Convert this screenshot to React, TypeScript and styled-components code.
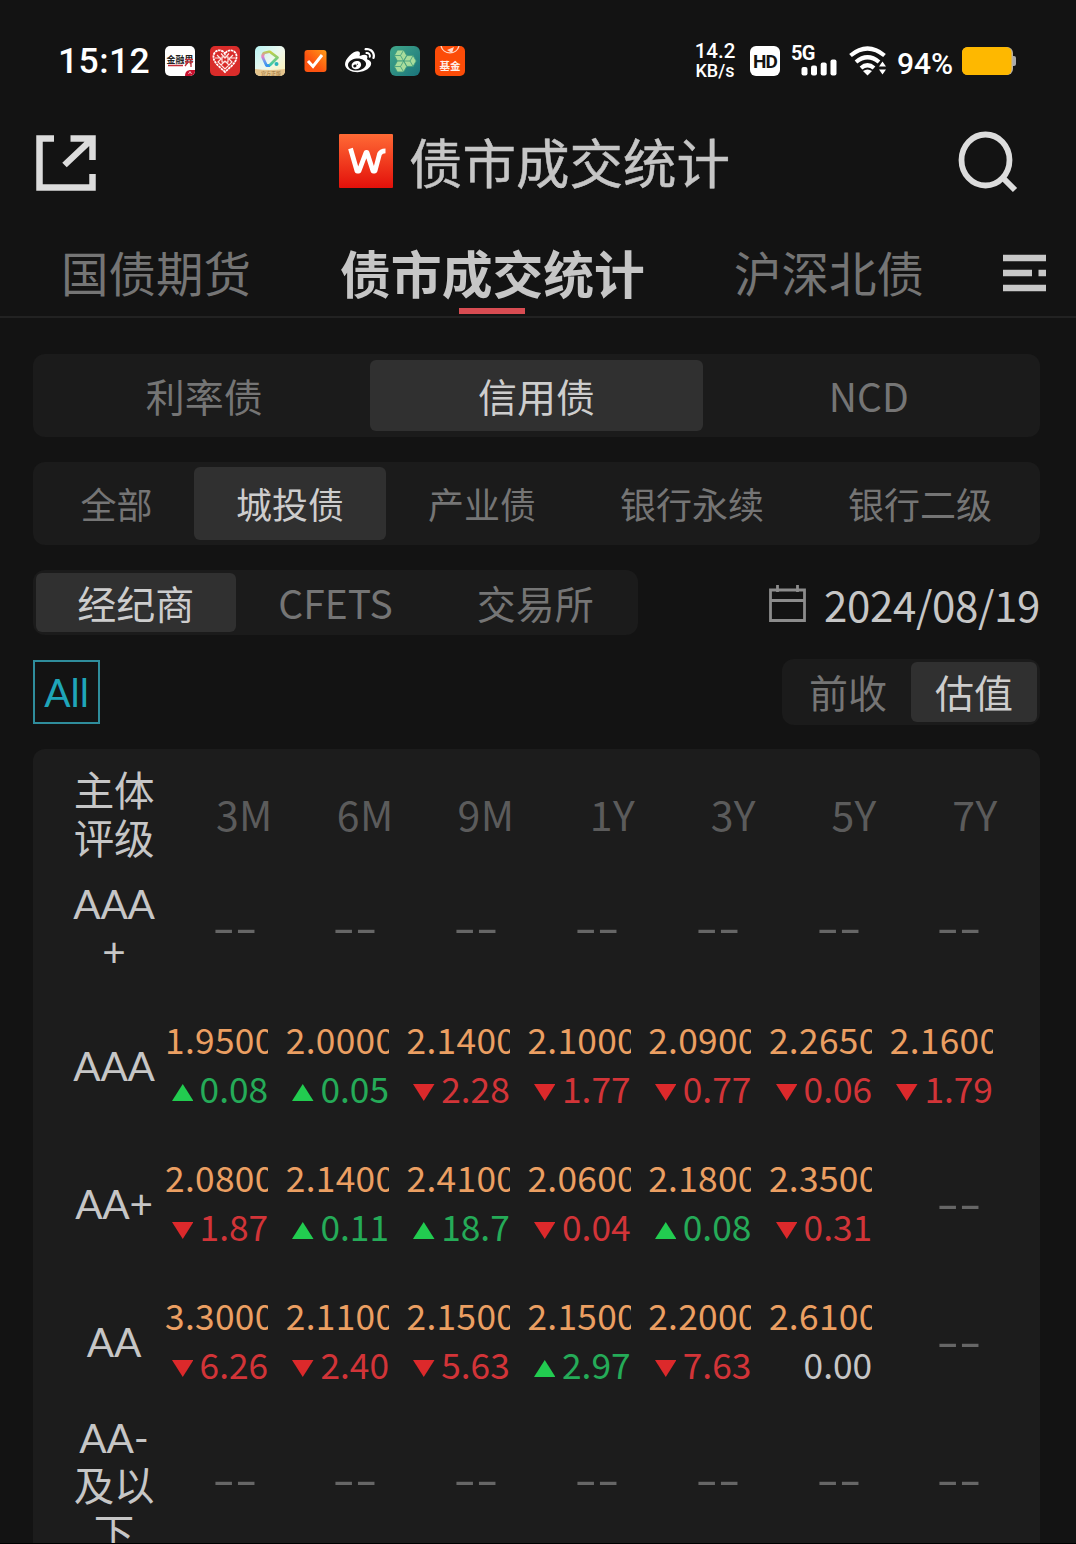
import React from "react";
import styled, { createGlobalStyle } from "styled-components";
import { FaWeibo } from "react-icons/fa";

const cjk = `"Noto Sans CJK SC", sans-serif`;
const latin = `Roboto, "Noto Sans CJK SC", sans-serif`;
const round = `Lato, "Noto Sans CJK SC", sans-serif`;

const Global = createGlobalStyle`
  * { box-sizing: border-box; }
  body { margin: 0; background: #131313; }
`;

const Screen = styled.div`
  width: 1076px;
  height: 1544px;
  overflow: hidden;
  display: flex;
  flex-direction: column;
  background: #131313;
  border-bottom: 1px solid #000;
  color: #c6c6c6;
  font-family: ${cjk};
  white-space: nowrap;
`;

/* ---------- status bar ---------- */
const StatusBar = styled.div`
  flex: none;
  height: 122px;
  padding: 0 60px 0 58px;
  display: flex;
  align-items: center;
  justify-content: space-between;
  font-family: ${latin};
  color: #fff;
`;
const StatusSide = styled.div`
  display: flex;
  align-items: center;
`;
const Clock = styled.span`
  width: 107px;
  font-size: 35.5px;
  font-weight: 500;
  letter-spacing: 0.4px;
  line-height: 40px;
`;
const AppIcons = styled.div`
  display: flex;
  gap: 15px;
  svg { display: block; }
`;
const Speed = styled.div`
  width: 44px;
  margin-right: 13px;
  text-align: center;
  font-weight: 500;
  font-size: 20.5px;
  line-height: 19px;
`;
const SpeedUnit = styled.div`
  font-size: 18px;
`;
const HdBadge = styled.div`
  width: 30px;
  height: 30px;
  margin-right: 11px;
  border-radius: 6px;
  background: #fff;
  color: #131313;
  font-size: 19px;
  font-weight: 700;
  line-height: 31px;
  text-align: center;
  letter-spacing: -0.8px;
`;
const Signal = styled.div`
  width: 46px;
  height: 32px;
  margin-right: 12px;
  display: grid;
  grid-template-rows: 16px 16px;
  font-size: 20px;
  font-weight: 700;
  line-height: 17px;
  letter-spacing: -0.8px;
  svg { justify-self: end; margin-top: -2px; }
`;
const Percent = styled.span`
  width: 57px;
  margin: 4px 8px 0 10px;
  font-size: 30px;
  font-weight: 500;
`;

/* ---------- title and tabs ---------- */
const TitleBar = styled.header`
  flex: none;
  height: 80px;
  padding: 0 57px 0 35px;
  display: flex;
  align-items: center;
  justify-content: space-between;
`;
const TitleGroup = styled.div`
  display: flex;
  align-items: center;
  gap: 16px;
  margin: 0 0 2px 15px;
`;
const Title = styled.h1`
  margin: 0;
  font-size: 53.5px;
  font-weight: 400;
  line-height: 76px;
  -webkit-text-stroke: 0.5px;
`;
const Tabs = styled.nav`
  flex: none;
  height: 116px;
  padding: 0 30px 0 61px;
  display: flex;
  align-items: stretch;
  justify-content: space-between;
  border-bottom: 2px solid #222;
`;
const Tab = styled.div<{ $active?: boolean }>`
  display: flex;
  flex-direction: column;
  align-items: center;
  padding-top: 36px;
  font-size: ${(p) => (p.$active ? 50.8 : 47.5)}px;
  font-weight: ${(p) => (p.$active ? 700 : 400)};
  line-height: 68px;
  color: ${(p) => (p.$active ? "#c6c6c6" : "#757575")};
`;
const TabLine = styled.div`
  width: 66px;
  height: 6px;
  margin-top: 2px;
  background: #d84c52;
`;
const MenuButton = styled.div`
  display: flex;
  align-items: center;
  margin-left: -10px;
  padding-top: 27px;
`;

/* ---------- filters ---------- */
const Filters = styled.section`
  flex: none;
  padding: 36px 36px 0 33px;
  display: flex;
  flex-direction: column;
`;
const Segment = styled.div<{ $height: number; $pad: string; $width?: number }>`
  display: flex;
  width: ${(p) => (p.$width ? `${p.$width}px` : "100%")};
  height: ${(p) => p.$height}px;
  padding: ${(p) => p.$pad};
  border-radius: 12px;
  background: #1b1b1b;
`;
const Option = styled.div<{ $active?: boolean; $size?: number; $grow?: number }>`
  flex: ${(p) => p.$grow ?? 1} 1 0;
  display: flex;
  align-items: center;
  justify-content: center;
  border-radius: 6px;
  font-size: ${(p) => p.$size ?? 39}px;
  line-height: 1;
  padding-bottom: 1px;
  background: ${(p) => (p.$active ? "#303030" : "transparent")};
  color: ${(p) => (p.$active ? "#cdcdcd" : "#757575")};
`;
const FilterRow = styled.div<{ $gap: number }>`
  display: flex;
  align-items: center;
  justify-content: space-between;
  margin-top: ${(p) => p.$gap}px;
`;
const DatePick = styled.div`
  display: flex;
  align-items: center;
  gap: 18px;
  font-size: 42px;
  line-height: 60px;
  letter-spacing: -0.35px;
  padding-top: 2px;
`;
const AllTag = styled.div`
  width: 67px;
  height: 64px;
  border: 2px solid #2f8d9c;
  color: #1fa5b9;
  font-family: ${round};
  font-size: 39px;
  line-height: 61px;
  text-align: center;
`;

/* ---------- table ---------- */
const Table = styled.section`
  flex: none;
  margin: 24px 36px 0 33px;
  padding-top: 22px;
  border-radius: 12px 12px 0 0;
  background: #1c1c1c;
`;
const Row = styled.div<{ $head?: boolean }>`
  display: grid;
  grid-template-columns: 115px repeat(7, 120.8px);
  grid-template-rows: 100%;
  height: ${(p) => (p.$head ? 88 : 138)}px;
  align-items: center;
`;
const Label = styled.div<{ $tall?: boolean }>`
  width: 84px;
  justify-self: end;
  align-self: ${(p) => (p.$tall ? "start" : "center")};
  margin: ${(p) => (p.$tall ? 3 : -1)}px -8px 0 0;
  text-align: center;
  font-family: ${round};
  font-size: 40.5px;
  line-height: 48px;
  letter-spacing: -0.2px;
`;
const Term = styled.div`
  margin-right: -4px;
  padding-bottom: 5px;
  text-align: right;
  font-size: 41px;
  line-height: 48px;
  letter-spacing: 0.4px;
  color: #5b5b5b;
`;
const Empty = styled.div`
  width: 42px;
  margin-left: 65.5px;
  padding-bottom: 9px;
  display: flex;
  justify-content: center;
  font-size: 46px;
  line-height: 48px;
  color: #666;
`;
const Wide = styled.span`
  transform: scaleX(1.4);
`;
const Quote = styled.div`
  width: 103.2px;
  margin-left: 17px;
  padding-bottom: 7px;
  overflow: hidden;
  font-size: 35.3px;
  line-height: 49px;
`;
const Price = styled.div`
  color: #eb9f62;
  letter-spacing: 0.3px;
`;
const Change = styled.div<{ $color: string }>`
  display: flex;
  align-items: center;
  justify-content: flex-end;
  gap: 6.5px;
  color: ${(p) => p.$color};
`;
const ArrowIcon = styled.svg`
  margin-top: 10px;
`;

const AppTile = ({ bg, children }: { bg: string; children?: React.ReactNode }) => (
  <svg width="30" height="30" viewBox="0 0 30 30">
    <rect width="30" height="30" rx="5" fill={bg} />
    {children}
  </svg>
);

const Hex = ({ x, y }: { x: number; y: number }) => (
  <g transform={`translate(${x} ${y})`} stroke="#3c9a7c" strokeWidth=".8" strokeLinejoin="round">
    <path d="M-6.200 0-3.100-5.400H3.100L6.200 0 3.100 5.400H-3.100Z" fill="#a8dc9c" />
    <path d="M-6.200 0H0L3.100-5.400M0 0 3.100 5.400" fill="none" />
  </g>
);

const StatusApps = () => (
  <AppIcons>
    <AppTile bg="#fff">
      <text x="1.500" y="17" fontSize="9.500" fontWeight="700" textLength="27" lengthAdjust="spacingAndGlyphs" fill="#222">金融界</text>
      <path d="M3 19.500H18M20 13.500H28M20 16H28M23 16 20 20M26 16V21" stroke="#c22b35" strokeWidth="1.300" fill="none" />
      <path d="M20 30C20 26 22 24 26 24H30V25A5 5 0 0 1 25 30Z" fill="#c8102e" />
      <path d="M23.500 28 25 25.500 26.500 28" stroke="#fff" strokeWidth=".7" fill="none" />
    </AppTile>
    <AppTile bg="#d92c2a">
      <path d="M15 26C11 22 3.500 17 3.500 11A6 6 0 0 1 15 8 6 6 0 0 1 26.500 11C26.500 17 19 22 15 26Z" fill="none" stroke="#fff" strokeWidth="1.800" strokeDasharray="2.500 .6" />
      <path d="M7 9 11 13 8 16 15 23 22 16 19 13 23 9M11 7.500 15 12 19 7.500M5 12H11M25 12H19M11 19 15 15 19 19M12 11H18V16H12Z" fill="none" stroke="#ffe6e2" strokeWidth="1.200" />
    </AppTile>
    <svg width="30" height="30" viewBox="0 0 30 30">
      <defs>
        <linearGradient id="pastel" x1="0" y1="0" x2="1" y2="1"><stop stopColor="#b8f4f4" /><stop offset=".5" stopColor="#eef8ee" /><stop offset="1" stopColor="#fff2b0" /></linearGradient>
        <linearGradient id="rainbowA" x1="0" y1="0" x2="0" y2="1"><stop stopColor="#b7cf55" /><stop offset=".35" stopColor="#ee82c6" /><stop offset=".7" stopColor="#6a9cf0" /><stop offset="1" stopColor="#3795ee" /></linearGradient>
        <linearGradient id="rainbowB" x1="0" y1="0" x2="0" y2="1"><stop stopColor="#c9cf45" /><stop offset="1" stopColor="#32c9b2" /></linearGradient>
        <clipPath id="tile"><rect width="30" height="30" rx="5" /></clipPath>
      </defs>
      <g clipPath="url(#tile)">
        <rect width="30" height="30" fill="url(#pastel)" />
        <path d="M15 5.500 9 7Q6.500 10 8.500 13L11.500 19.500H15" fill="none" stroke="url(#rainbowA)" strokeWidth="2.800" strokeLinejoin="round" />
        <path d="M14.500 5.500 22.500 11.500 14.500 19.500" fill="none" stroke="url(#rainbowB)" strokeWidth="2.800" strokeLinejoin="round" />
        <circle cx="21.500" cy="18" r="2" fill="#28b4ba" />
        <path d="M0 23Q15 25 30 23V30H0Z" fill="#e5c48c" />
        <text x="6" y="29" fontSize="5" fill="#9a7035">官方正版</text>
      </g>
    </svg>
    <svg width="30" height="30" viewBox="0 0 30 30">
      <defs><linearGradient id="orange" x1="1" y1="0" x2="0" y2="1"><stop stopColor="#ff9c18" /><stop offset=".6" stopColor="#fc5310" /></linearGradient></defs>
      <rect x="4.500" y="4" width="22" height="22" rx="3" fill="url(#orange)" />
      <path d="M8 15 13 20.500 22 9" fill="none" stroke="#fff" strokeWidth="3" />
    </svg>
    <FaWeibo size={30} />
    <svg width="30" height="30" viewBox="0 0 30 30">
      <defs><linearGradient id="teal" x1="0" y1="0" x2="1" y2="1"><stop stopColor="#41a78a" /><stop offset="1" stopColor="#1a737b" /></linearGradient></defs>
      <rect width="30" height="30" rx="6" fill="url(#teal)" />
      <Hex x={10.5} y={9.5} />
      <Hex x={20} y={15} />
      <Hex x={10.5} y={20.5} />
    </svg>
    <AppTile bg="#fc4c08">
      <path d="M6 0A9.300 9.300 0 0 0 24 0" fill="none" stroke="#ffd9c8" strokeWidth="1.300" />
      <path d="M12 4 19 1 17 7Z" fill="#ffd9c8" />
      <text x="4.500" y="23.500" fontSize="10.500" fontWeight="700" fill="#fff0e8">基金</text>
    </AppTile>
  </AppIcons>
);

const Wifi = () => (
  <svg width="38" height="30" viewBox="0 0 38 30">
    <g fill="none" stroke="#fff" strokeWidth="4.200">
      <path d="M1.500 9.500Q18.500-4.500 35.500 9.500" />
      <path d="M7 16Q18.500 6.500 30 16" />
      <path d="M12 22Q18.500 16.500 25 22" />
    </g>
    <path d="M14 25Q18.500 22 23 25L18.500 29.500Z" fill="#fff" />
    <path d="M28.500 20 33.500 13.500 38 18V30H28.500Z" fill="#131313" />
    <path d="M30 20.500 33.500 15.500 37 20.500ZM30 23.500H37L33.500 28.500Z" fill="#fff" />
  </svg>
);

const Battery = () => (
  <svg width="54" height="28" viewBox="0 0 54 28">
    <rect x="44" y="9" width="10" height="10" rx="2" fill="#aaa" />
    <rect width="51" height="28" rx="6" fill="#b9b0a0" />
    <rect width="49.500" height="28" rx="5.500" fill="#feb800" />
  </svg>
);

const ShareIcon = () => (
  <svg width="62" height="60" viewBox="0 0 62 60">
    <path d="M19 6.500H4.500V55.500H57.500V42" fill="none" stroke="#dcdcdc" strokeWidth="6.500" />
    <path d="M35.500 6.500H57.500V28M56 8 29.500 33" fill="none" stroke="#dcdcdc" strokeWidth="6.500" />
  </svg>
);

const Logo = () => (
  <svg width="54" height="54" viewBox="0 0 54 54">
    <defs><linearGradient id="logo" x1="0" y1="0" x2="0" y2="1"><stop stopColor="#ff6a35" /><stop offset="1" stopColor="#e3100a" /></linearGradient></defs>
    <rect width="54" height="54" rx="1" fill="url(#logo)" />
    <path d="M11.500 14.500 18 37H20L27 18.500H28L34 37H36L40.500 20Q41.800 16.800 46.500 16.800" fill="none" stroke="#fff" strokeWidth="4.800" strokeLinejoin="round" />
  </svg>
);

const SearchIcon = () => (
  <svg width="62" height="62" viewBox="0 0 62 62">
    <ellipse cx="28.500" cy="29" rx="24" ry="25.500" fill="none" stroke="#dcdcdc" strokeWidth="5.800" />
    <path d="M45 46 58 59" stroke="#dcdcdc" strokeWidth="6" />
  </svg>
);

const MenuIcon = () => (
  <svg width="43" height="38" viewBox="0 0 43 38">
    <path d="M0 4H43M0 19H29M35.500 19H43M0 34H43" stroke="#c8c8c8" strokeWidth="6.500" />
  </svg>
);

const CalendarIcon = () => (
  <svg width="37" height="38" viewBox="0 0 37 38">
    <path d="M1.500 5H35.500V35.500H1.500ZM1.500 15.500H35.500M8.500 0V7M28.500 0V7" fill="none" stroke="#8c8c8c" strokeWidth="2.800" />
  </svg>
);

const Arrow = ({ up }: { up: boolean }) => (
  <ArrowIcon width="21.500" height="17" viewBox="0 0 21.5 17">
    <path d={up ? "M0 17 10.750 0 21.500 17Z" : "M0 0H21.500L10.750 17Z"} fill={up ? "#22cc50" : "#dc292b"} />
  </ArrowIcon>
);

const terms = ["3M", "6M", "9M", "1Y", "3Y", "5Y", "7Y"];

type Cell = [string, string] | null;
const rows: { label: string[]; cells: Cell[] }[] = [
  { label: ["AAA", "+"], cells: [null, null, null, null, null, null, null] },
  { label: ["AAA"], cells: [["1.9500", "+0.08"], ["2.0000", "+0.05"], ["2.1400", "-2.28"], ["2.1000", "-1.77"], ["2.0900", "-0.77"], ["2.2650", "-0.06"], ["2.1600", "-1.79"]] },
  { label: ["AA+"], cells: [["2.0800", "-1.87"], ["2.1400", "+0.11"], ["2.4100", "+18.7"], ["2.0600", "-0.04"], ["2.1800", "+0.08"], ["2.3500", "-0.31"], null] },
  { label: ["AA"], cells: [["3.3000", "-6.26"], ["2.1100", "-2.40"], ["2.1500", "-5.63"], ["2.1500", "+2.97"], ["2.2000", "-7.63"], ["2.6100", "0.00"], null] },
  { label: ["AA-", "及以", "下"], cells: [null, null, null, null, null, null, null] },
];

const QuoteCell = ({ cell }: { cell: Cell }) => {
  if (!cell) return <Empty><Wide>--</Wide></Empty>;
  const [price, change] = cell;
  const sign = change[0];
  const signed = sign === "+" || sign === "-";
  const color = sign === "+" ? "#25ab58" : sign === "-" ? "#d23438" : "#c6c6c6";
  return (
    <Quote>
      <Price>{price}</Price>
      <Change $color={color}>
        {signed && <Arrow up={sign === "+"} />}
        <span>{signed ? change.slice(1) : change}</span>
      </Change>
    </Quote>
  );
};

export default function App() {
  return (
    <>
      <Global />
      <Screen>
        <StatusBar>
          <StatusSide>
            <Clock>15:12</Clock>
            <StatusApps />
          </StatusSide>
          <StatusSide>
            <Speed>14.2<SpeedUnit>KB/s</SpeedUnit></Speed>
            <HdBadge>HD</HdBadge>
            <Signal>
              5G
              <svg width="36" height="17" viewBox="0 0 36 17" fill="#fff">
                <rect x="0.500" y="8" width="6" height="8.500" rx="2" />
                <rect x="10" y="6.500" width="6" height="10" rx="2" />
                <rect x="19.700" y="3.500" width="6" height="13" rx="2" />
                <rect x="29.500" y="0.500" width="6" height="16" rx="2" />
              </svg>
            </Signal>
            <Wifi />
            <Percent>94%</Percent>
            <Battery />
          </StatusSide>
        </StatusBar>

        <TitleBar>
          <ShareIcon />
          <TitleGroup>
            <Logo />
            <Title>债市成交统计</Title>
          </TitleGroup>
          <SearchIcon />
        </TitleBar>

        <Tabs>
          <Tab>国债期货</Tab>
          <Tab $active>债市成交统计<TabLine /></Tab>
          <Tab>沪深北债</Tab>
          <MenuButton><MenuIcon /></MenuButton>
        </Tabs>

        <Filters>
          <Segment $height={83} $pad="6px 5px">
            <Option>利率债</Option>
            <Option $active>信用债</Option>
            <Option>NCD</Option>
          </Segment>
          <FilterRow $gap={25}>
            <Segment $height={83} $pad="5px 6px">
              <Option $size={36} $grow={155}>全部</Option>
              <Option $size={36} $grow={192} $active>城投债</Option>
              <Option $size={36} $grow={192}>产业债</Option>
              <Option $size={36} $grow={228}>银行永续</Option>
              <Option $size={36} $grow={228}>银行二级</Option>
            </Segment>
          </FilterRow>
          <FilterRow $gap={25}>
            <Segment $height={65} $pad="3px" $width={605}>
              <Option $active>经纪商</Option>
              <Option>CFETS</Option>
              <Option>交易所</Option>
            </Segment>
            <DatePick><CalendarIcon />2024/08/19</DatePick>
          </FilterRow>
          <FilterRow $gap={24}>
            <AllTag>All</AllTag>
            <Segment $height={66} $pad="3px" $width={258}>
              <Option>前收</Option>
              <Option $active>估值</Option>
            </Segment>
          </FilterRow>
        </Filters>

        <Table>
          <Row $head>
            <Label>主体<br />评级</Label>
            {terms.map((t) => <Term key={t}>{t}</Term>)}
          </Row>
          {rows.map((r) => (
            <Row key={r.label.join("")}>
              <Label $tall={r.label.length > 2}>{r.label.map((line) => <div key={line}>{line}</div>)}</Label>
              {r.cells.map((c, i) => <QuoteCell key={i} cell={c} />)}
            </Row>
          ))}
        </Table>
      </Screen>
    </>
  );
}
